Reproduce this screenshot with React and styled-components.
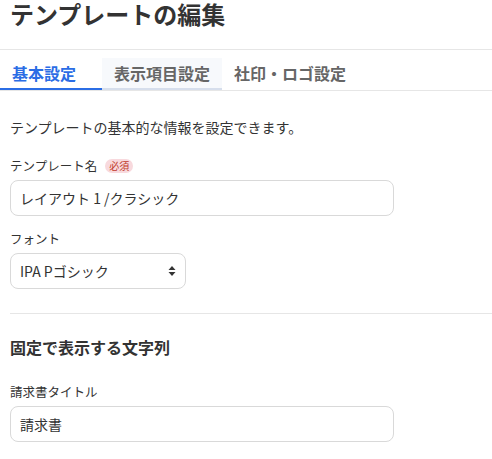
import React from "react";
import styled, { createGlobalStyle } from "styled-components";

const Global = createGlobalStyle`
  html, body { margin: 0; padding: 0; background: #fff; }
  body {
    font-family: "Noto Sans CJK JP", "Noto Sans", sans-serif;
    color: #333;
  }
  * { box-sizing: border-box; }
`;

const Page = styled.div`
  width: 492px;
  height: 459px;
  overflow: hidden;
`;

const Header = styled.header`
  height: 50px;
  border-bottom: 1px solid #e6e6e6;
  padding-left: 10px;
`;

const Title = styled.h1`
  margin: 0;
  font-size: 24px;
  line-height: 28px;
  font-weight: 700;
  color: #333;
`;

const TabBar = styled.nav`
  display: flex;
  margin-top: 8px;
  border-bottom: 1px solid #e6e6e6;
`;

const Tab = styled.div`
  height: 32px;
  min-width: ${(p) => (p.$wide ? "102px" : "0")};
  padding: 0 12px;
  font-size: 16px;
  line-height: 30px;
  font-weight: 700;
  white-space: nowrap;
  color: ${(p) => (p.$active ? "#2b6de5" : "#666")};
  background: ${(p) => (p.$hover ? "#f7f9fc" : "transparent")};
  border-bottom: 2px solid
    ${(p) => (p.$active ? "#2b6de5" : p.$hover ? "#d6deec" : "transparent")};
`;

const Content = styled.section`
  padding-left: 10px;
  display: flex;
  flex-direction: column;
`;

const Description = styled.p`
  margin: 26px 0 0;
  font-size: 14px;
  line-height: 20px;
  color: #333;
`;

const Field = styled.div`
  display: flex;
  flex-direction: column;
  margin-top: ${(p) => p.$mt}px;
`;

const Label = styled.div`
  display: flex;
  align-items: center;
  gap: 8px;
  font-size: 12.5px;
  line-height: 18px;
  color: #333;
  margin-bottom: 5px;
`;

const Required = styled.span`
  display: inline-flex;
  align-items: center;
  justify-content: center;
  height: 14px;
  padding: 0 4px;
  border-radius: 7px;
  background: #f8d9dd;
  color: #c0392b;
  font-size: 10px;
  line-height: 14px;
`;

const Input = styled.div`
  width: ${(p) => p.$w}px;
  height: 36px;
  border: 1px solid #d9d9d9;
  border-radius: 8px;
  padding: 0 9px;
  display: flex;
  align-items: center;
  justify-content: space-between;
  font-size: 14px;
  color: #333;
  background: #fff;
`;

const Divider = styled.hr`
  margin: 24px 0 0;
  border: 0;
  border-top: 1px solid #e6e6e6;
  width: 100%;
`;

const Heading = styled.h2`
  margin: 21px 0 0;
  font-size: 16px;
  line-height: 24px;
  font-weight: 700;
  color: #333;
`;

const Arrows = () => (
  <svg width="8" height="12" viewBox="0 0 8 12">
    <path d="M4 1 L7.5 5 L0.5 5 Z" fill="#333" />
    <path d="M4 11 L7.5 7 L0.5 7 Z" fill="#333" />
  </svg>
);

export default function App() {
  return (
    <Page>
      <Global />
      <Header>
        <Title>テンプレートの編集</Title>
      </Header>
      <TabBar>
        <Tab $active $wide>基本設定</Tab>
        <Tab $hover>表示項目設定</Tab>
        <Tab>社印・ロゴ設定</Tab>
      </TabBar>
      <Content>
        <Description>テンプレートの基本的な情報を設定できます。</Description>
        <Field $mt={20}>
          <Label>
            テンプレート名<Required>必須</Required>
          </Label>
          <Input $w={384}>レイアウト 1 /クラシック</Input>
        </Field>
        <Field $mt={14}>
          <Label>フォント</Label>
          <Input $w={176}>
            IPA Pゴシック
            <Arrows />
          </Input>
        </Field>
        <Divider />
        <Heading>固定で表示する文字列</Heading>
        <Field $mt={24}>
          <Label>請求書タイトル</Label>
          <Input $w={384}>請求書</Input>
        </Field>
      </Content>
    </Page>
  );
}
